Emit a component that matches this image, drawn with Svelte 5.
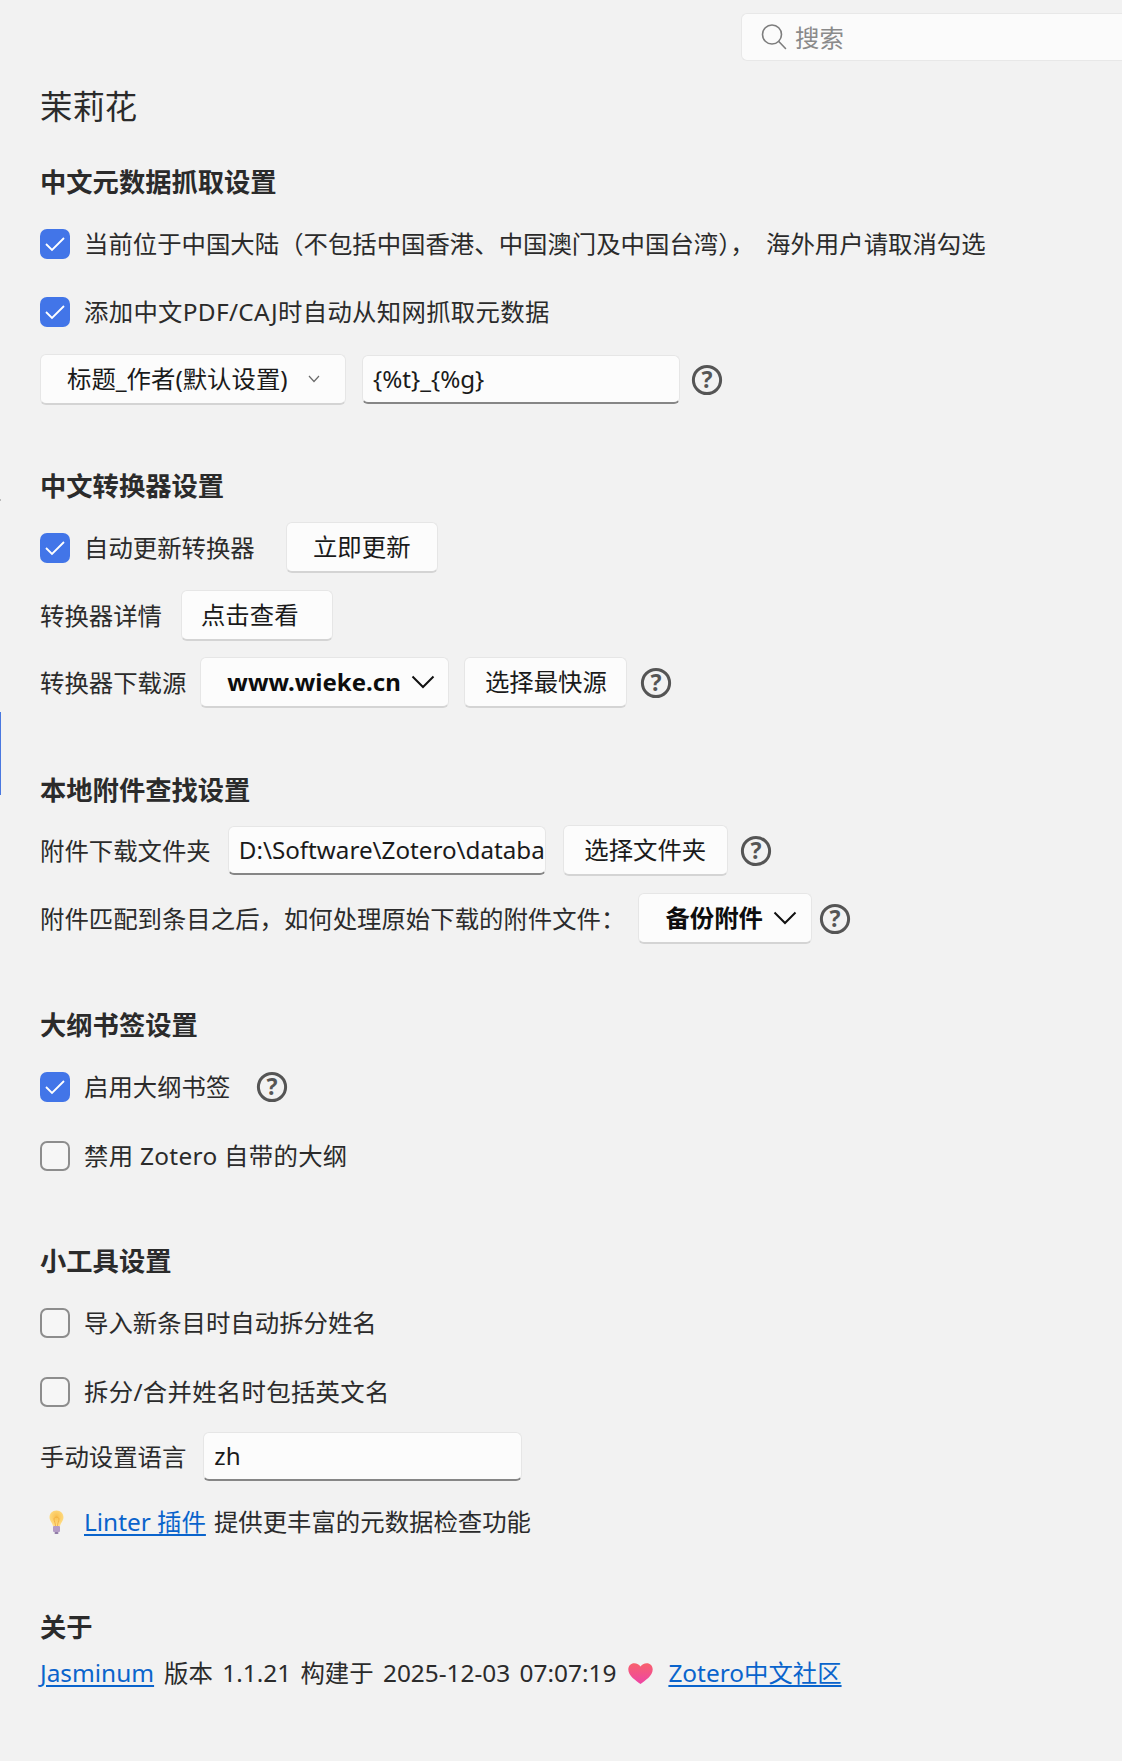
<div class="page">
	<span class="edge-tick"></span>
	<span class="edge-blue"></span>

	<div class="search-row">
		<div class="search">
			<svg class="search-icon" width="26" height="26" viewBox="0 0 26 26" fill="none" stroke="#7d7d7d" stroke-width="1.6">
				<circle cx="11" cy="10.5" r="9.5" />
				<path d="M17.8 17.5 L24.5 24.5" stroke-linecap="round" />
			</svg>
			<input class="search-input" placeholder="搜索" />
		</div>
	</div>

	<h1>茉莉花</h1>

	<section class="s1">
		<h2>中文元数据抓取设置</h2>
		<label class="check-row first">
			<span class="box on">{@render tick()}</span>
			<span class="notice">当前位于中国大陆（不包括中国香港、中国澳门及中国台湾）， 海外用户请取消勾选</span>
		</label>
		<label class="check-row">
			<span class="box on">{@render tick()}</span>
			<span class="wide">添加中文PDF/CAJ时自动从知网抓取元数据</span>
		</label>
		<div class="row r-format">
			<div class="btn select-sm">
				<span>标题_作者(默认设置)</span>
				<svg width="12" height="8" viewBox="0 0 12 8" fill="none" stroke="#6a6a6a" stroke-width="1.2"><path d="M1 1 L6 6.5 L11 1" /></svg>
			</div>
			<input class="input w-format" value={'{%t}_{%g}'} />
			{@render help()}
		</div>
	</section>

	<section class="s2">
		<h2>中文转换器设置</h2>
		<div class="row r-auto">
			<span class="box on">{@render tick()}</span>
			<span class="after-box">自动更新转换器</span>
			<div class="btn b-update">立即更新</div>
		</div>
		<div class="row r-detail">
			<span class="lbl">转换器详情</span>
			<div class="btn b-view">点击查看</div>
		</div>
		<div class="row r-source">
			<span class="lbl">转换器下载源</span>
			<div class="btn select b-source">
				<b>www.wieke.cn</b>
				{@render chevron()}
			</div>
			<div class="btn b-fast">选择最快源</div>
			{@render help()}
		</div>
	</section>

	<section class="s3">
		<h2>本地附件查找设置</h2>
		<div class="row r-folder">
			<span class="lbl">附件下载文件夹</span>
			<input class="input w-folder" value={'D:\\Software\\Zotero\\database\\attachments'} />
			<div class="btn b-folder">选择文件夹</div>
			{@render help()}
		</div>
		<div class="row r-after">
			<span class="lbl">附件匹配到条目之后，如何处理原始下载的附件文件：</span>
			<div class="btn select b-backup">
				<b>备份附件</b>
				{@render chevron()}
			</div>
			{@render help()}
		</div>
	</section>

	<section class="s4">
		<h2>大纲书签设置</h2>
		<div class="row r-outline">
			<span class="box on">{@render tick()}</span>
			<span class="after-box">启用大纲书签</span>
			{@render help()}
		</div>
		<label class="check-row after-outline">
			<span class="box"></span>
			<span class="wide">禁用 Zotero 自带的大纲</span>
		</label>
	</section>

	<section class="s5">
		<h2>小工具设置</h2>
		<label class="check-row first">
			<span class="box"></span>
			<span>导入新条目时自动拆分姓名</span>
		</label>
		<label class="check-row split">
			<span class="box"></span>
			<span class="wide">拆分/合并姓名时包括英文名</span>
		</label>
		<div class="row r-lang">
			<span class="lbl">手动设置语言</span>
			<input class="input w-lang" value="zh" />
		</div>
		<div class="row r-linter">
			<svg class="bulb" width="15" height="24" viewBox="0 0 15 24">
				<defs>
					<radialGradient id="bulbFill" cx="0.5" cy="0.4" r="0.6">
						<stop offset="0" stop-color="#f9c04e" />
						<stop offset="1" stop-color="#ffdf8a" />
					</radialGradient>
				</defs>
				<path d="M7.5 0.5 C3.2 0.5 0.5 3.6 0.5 7.2 C0.5 10.4 3 12.2 4 16 L11 16 C12 12.2 14.5 10.4 14.5 7.2 C14.5 3.6 11.8 0.5 7.5 0.5 Z" fill="url(#bulbFill)" />
				<path d="M5 9 C5 6.5 10 6.5 10 9 C10 11 8.5 13 8.5 16 M6.5 16 C6.5 13 5 11 5 9" fill="none" stroke="#f0a93a" stroke-width="0.8" />
				<rect x="4" y="16" width="7" height="6" rx="1" fill="#b49cc6" />
				<rect x="5.5" y="22" width="4" height="2" rx="1" fill="#8f7aa6" />
			</svg>
			<a class="link" href="#linter">Linter 插件</a>
			<span class="linter-text">提供更丰富的元数据检查功能</span>
		</div>
	</section>

	<section class="s6">
		<h2>关于</h2>
		<div class="row r-about">
			<a class="link" href="#jasminum">Jasminum</a>
			<span class="version">版本 1.1.21 构建于 2025-12-03 07:07:19</span>
			<svg class="heart" width="25" height="21" viewBox="0 0 25 21">
				<defs>
					<linearGradient id="heartFill" x1="0" y1="0" x2="0" y2="1">
						<stop offset="0" stop-color="#f8616c" />
						<stop offset="1" stop-color="#ee45a6" />
					</linearGradient>
				</defs>
				<path d="M12.5 21 C8 17.5 0.3 13 0.3 6.5 C0.3 2.6 3 0.2 6.2 0.2 C9 0.2 11.3 1.6 12.5 3.6 C13.7 1.6 16 0.2 18.8 0.2 C22 0.2 24.7 2.6 24.7 6.5 C24.7 13 17 17.5 12.5 21 Z" fill="url(#heartFill)" />
			</svg>
			<a class="link community" href="#zotero">Zotero中文社区</a>
		</div>
	</section>
</div>

{#snippet tick()}
	<svg width="20" height="16" viewBox="0 0 20 16" fill="none" stroke="#fff" stroke-width="1.8"><path d="M1 8 L7 14 L19 2" /></svg>
{/snippet}

{#snippet chevron()}
	<svg class="chev" width="24" height="14" viewBox="0 0 24 14" fill="none" stroke="#111" stroke-width="2"><path d="M1.5 1.5 L12 12 L22.5 1.5" /></svg>
{/snippet}

{#snippet help()}
	<svg class="help" width="32" height="32" viewBox="0 0 32 32">
		<circle cx="16" cy="16" r="13.6" fill="none" stroke="#555" stroke-width="3" />
		<text x="16" y="24" text-anchor="middle" class="help-q">?</text>
	</svg>
{/snippet}

<style>
	:global(body) {
		margin: 0;
		background: #f2f2f2;
	}

	.page {
		position: relative;
		box-sizing: border-box;
		height: 1761px;
		overflow: hidden;
		padding-left: 40px;
		background: #f2f2f2;
		font-family: "Noto Sans", "Noto Sans CJK SC", sans-serif;
		font-size: 24.4px;
		line-height: 34px;
		color: #2b2b2b;
	}

	.edge-blue {
		position: absolute;
		left: 0;
		top: 712px;
		width: 1px;
		height: 83px;
		background: #4a78e0;
	}

	.edge-tick {
		position: absolute;
		left: 0;
		top: 499px;
		width: 1px;
		height: 2px;
		background: #bbb;
	}

	.search-row {
		display: flex;
		justify-content: flex-end;
		padding-top: 13px;
		margin-left: -40px;
	}

	.search {
		display: flex;
		align-items: center;
		box-sizing: border-box;
		width: 381px;
		height: 48px;
		padding-left: 19px;
		gap: 8px;
		background: #fbfbfb;
		border: 1px solid #e8e8e8;
		border-right: 0;
		border-radius: 6px 0 0 6px;
	}

	.search-input {
		flex: 1;
		min-width: 0;
		padding: 2px 0 0;
		border: 0;
		outline: 0;
		background: transparent;
		font: inherit;
	}

	.search-input::placeholder {
		color: #8a8a8a;
		opacity: 1;
	}

	h1 {
		margin: 22px 0 0;
		font-size: 32.4px;
		line-height: 46px;
		font-weight: 400;
		color: #2b2b2b;
	}

	h2 {
		margin: 0;
		font-size: 26.3px;
		line-height: 36px;
		font-weight: 700;
		color: #2b2b2b;
	}

	.s1 {
		margin-top: 35px;
	}

	.s2 {
		margin-top: 63px;
	}

	.s3 {
		margin-top: 64px;
	}

	.s4 {
		margin-top: 63px;
	}

	.s5 {
		margin-top: 70px;
	}

	.s6 {
		margin-top: 70px;
	}

	.check-row {
		display: flex;
		align-items: center;
		gap: 14px;
		height: 34px;
		margin-top: 34px;
	}

	.check-row.first {
		margin-top: 27px;
	}

	.check-row.after-outline {
		margin-top: 35px;
	}

	.check-row.split {
		margin-top: 35px;
	}

	.notice {
		word-spacing: 5px;
	}

	.wide {
		letter-spacing: 0.3px;
	}

	.row {
		display: flex;
		align-items: center;
	}

	.box {
		display: flex;
		align-items: center;
		justify-content: center;
		box-sizing: border-box;
		flex: none;
		width: 30px;
		height: 30px;
		border: 2px solid #8d8d8d;
		border-radius: 7px;
		background: #f6f6f6;
	}

	.box.on {
		border: 0;
		background: #4275e8;
	}

	.after-box {
		margin-left: 14px;
	}

	.btn {
		display: flex;
		align-items: center;
		justify-content: center;
		box-sizing: border-box;
		height: 51px;
		background: #fcfcfc;
		border: 1px solid #e6e6e6;
		border-bottom: 2px solid #d4d4d4;
		border-radius: 6px;
		color: #1a1a1a;
	}

	.select {
		justify-content: flex-start;
		padding-left: 26px;
		gap: 10px;
	}

	.select b {
		color: #0d0d0d;
	}

	.input {
		box-sizing: border-box;
		height: 49px;
		padding: 0 0 2px 10px;
		background: #fcfcfc;
		border: 1px solid #e6e6e6;
		border-bottom: 2px solid #868686;
		border-radius: 6px;
		outline: 0;
		font-family: inherit;
		font-size: 24.2px;
		color: #1a1a1a;
	}

	.help {
		flex: none;
	}

	.help-q {
		font-size: 23px;
		font-weight: 700;
		fill: #555;
	}

	.link {
		color: #0a64cc;
		text-decoration: underline;
		text-underline-offset: 3px;
	}

	.r-format {
		margin-top: 25px;
	}

	.select-sm {
		width: 306px;
		justify-content: flex-start;
		padding-left: 26px;
		gap: 20px;
	}

	.w-format {
		width: 318px;
		margin-left: 16px;
		margin-right: 11px;
	}

	.r-auto {
		margin-top: 18px;
	}

	.b-update {
		width: 152px;
		margin-left: 31px;
	}

	.r-detail {
		margin-top: 17px;
	}

	.b-view {
		width: 152px;
		margin-left: 19px;
		justify-content: flex-start;
		padding-left: 19px;
	}

	.r-source {
		margin-top: 16px;
	}

	.b-source {
		width: 249px;
		margin-left: 14px;
	}

	.b-source b {
		font-size: 24px;
	}

	.b-fast {
		width: 163px;
		margin-left: 15px;
		margin-right: 13px;
	}

	.r-folder {
		margin-top: 17px;
	}

	.w-folder {
		width: 318px;
		margin-left: 17px;
	}

	.b-folder {
		width: 165px;
		margin-left: 17px;
		margin-right: 12px;
	}

	.r-after {
		margin-top: 17px;
	}

	.b-backup {
		width: 174px;
		margin-left: 13px;
		margin-right: 7px;
	}

	.r-outline {
		margin-top: 27px;
	}

	.r-outline .help {
		margin-left: 26px;
	}

	.r-lang {
		margin-top: 23px;
	}

	.w-lang {
		width: 319px;
		margin-left: 17px;
	}

	.r-linter {
		margin-top: 24px;
	}

	.bulb {
		margin-left: 9px;
		margin-right: 20px;
	}

	.linter-text {
		margin-left: 8px;
	}

	.r-about {
		margin-top: 11px;
	}

	.version {
		margin-left: 10px;
		word-spacing: 3px;
	}

	.heart {
		margin: 0 15px 0 12px;
	}
</style>
